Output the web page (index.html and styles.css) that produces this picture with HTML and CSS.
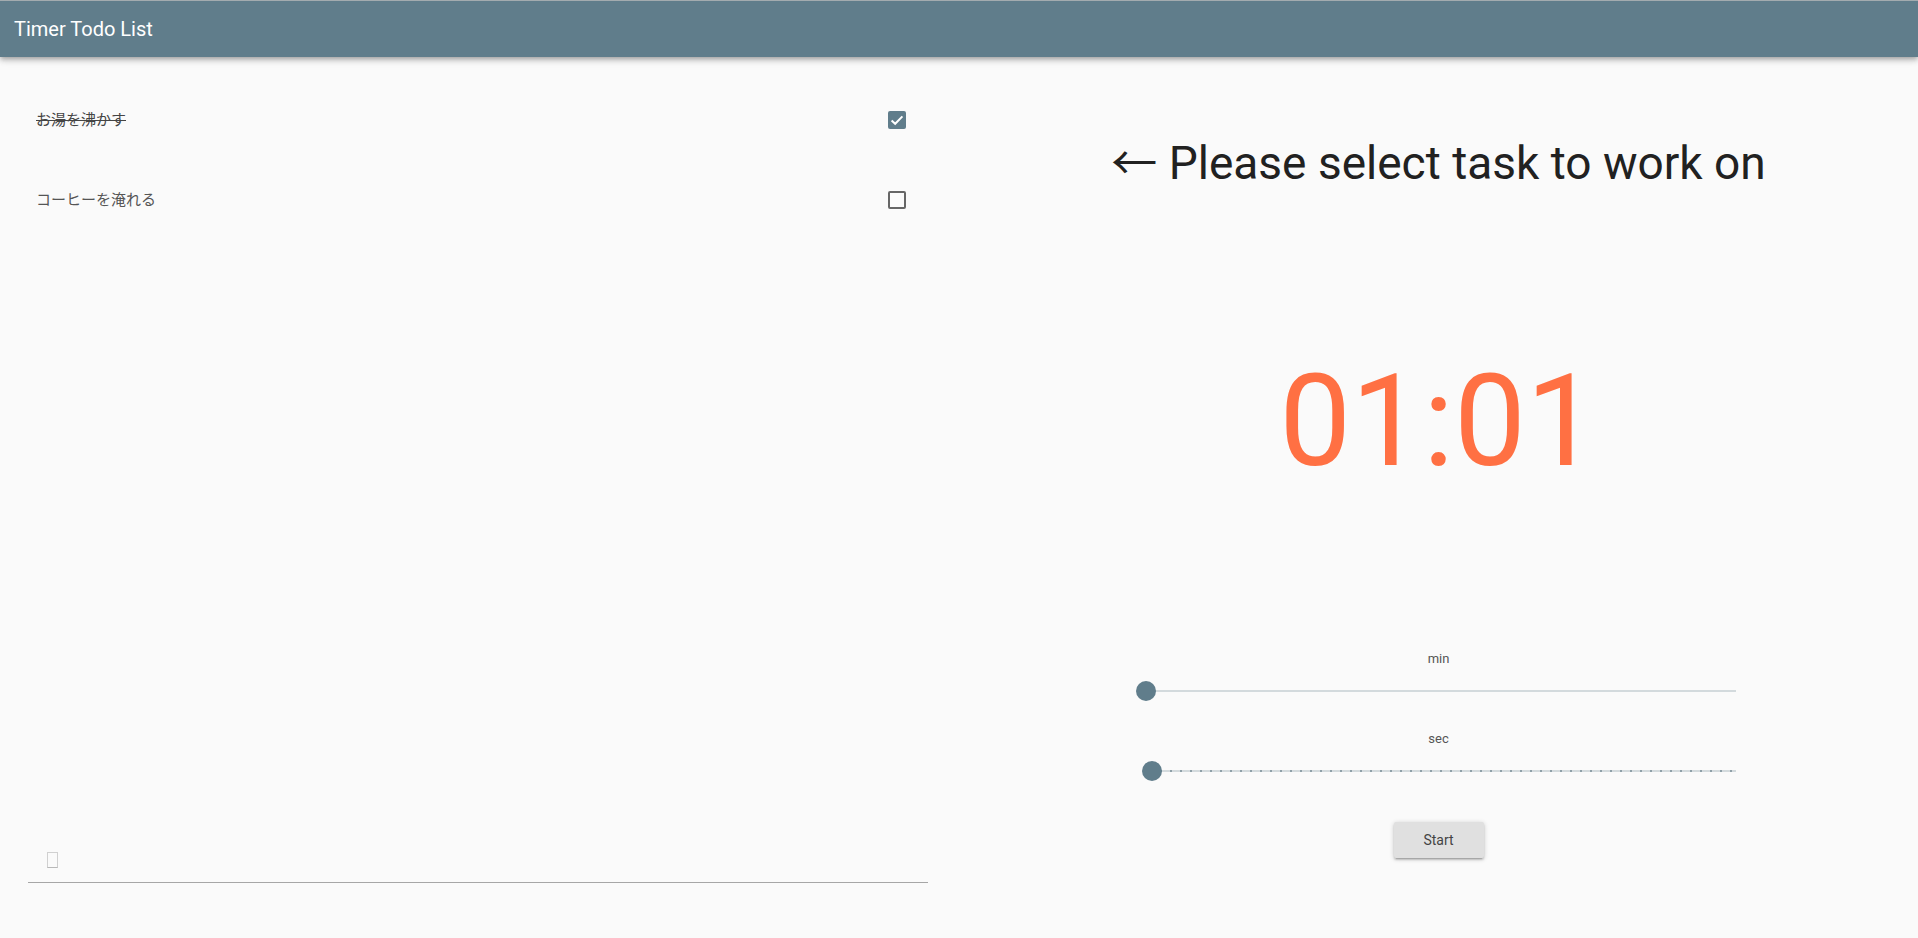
FILE: index.html
```html
<!DOCTYPE html>
<html lang="ja">
<head>
<meta charset="utf-8">
<title>Timer Todo List</title>
<link rel="stylesheet" href="styles.css">
</head>
<body>
<header class="appbar"><h1 class="appbar-title">Timer Todo List</h1></header>
<main class="layout">
  <section class="todo">
    <ul class="todo-list">
      <li class="todo-item done">
        <span class="todo-label">お湯を沸かす</span>
        <span class="checkbox checked"><svg viewBox="0 0 18 18" width="18" height="18"><path d="M3.6 9.4 L7.2 12.8 L14.4 5.4" fill="none" stroke="#fff" stroke-width="2"/></svg></span>
      </li>
      <li class="todo-item">
        <span class="todo-label">コーヒーを淹れる</span>
        <span class="checkbox"></span>
      </li>
    </ul>
    <div class="new-item"><span class="tofu"></span></div>
  </section>
  <section class="timer">
    <h2 class="prompt">← Please select task to work on</h2>
    <div class="clock">01:01</div>
    <div class="slider-label first">min</div>
    <div class="slider"><span class="track"></span><span class="thumb"></span></div>
    <div class="slider-label">sec</div>
    <div class="slider"><span class="track ticks"></span><span class="thumb" style="left: 6px"></span></div>
    <button class="start-btn">Start</button>
  </section>
</main>
</body>
</html>
```
FILE: styles.css
```css
* { box-sizing: border-box; }
html, body { margin: 0; padding: 0; }
body {
  background: #fafafa;
  font-family: Roboto, "Noto Sans CJK JP", sans-serif;
  height: 938px;
  overflow: hidden;
}
.appbar {
  position: relative;
  z-index: 2;
  height: 57px;
  border-top: 1px solid #a3abaf;
  background: #607d8b;
  display: flex;
  align-items: center;
  padding-left: 14px;
  box-shadow: 0 2px 4px -1px rgba(0,0,0,.2), 0 4px 5px 0 rgba(0,0,0,.14), 0 1px 10px 0 rgba(0,0,0,.12);
}
.appbar-title {
  margin: 0;
  color: #fff;
  font-size: 20px;
  font-weight: 400;
  line-height: 24px;
  padding-bottom: 1px;
}
.layout {
  display: grid;
  grid-template-columns: 1fr 1fr;
  height: 881px;
}
.todo {
  display: flex;
  flex-direction: column;
  padding: 0 31px 55px 28px;
}
.todo-list {
  list-style: none;
  margin: 0;
  padding: 23px 0 0;
}
.todo-item {
  height: 80px;
  display: flex;
  align-items: center;
  justify-content: space-between;
  padding: 0 22px 0 8px;
}
.todo-label {
  font-family: Roboto, "Noto Sans CJK JP", sans-serif;
  font-size: 15px;
  color: #555;
  position: relative;
  top: -2px;
}
.todo-item.done .todo-label {
  color: #444;
  text-decoration: line-through;
}
.checkbox {
  width: 18px;
  height: 18px;
  border: 2px solid #666;
  border-radius: 2px;
  display: block;
}
.checkbox.checked {
  border: none;
  background: #607d8b;
}
.checkbox svg { display: block; }
.new-item {
  margin-top: auto;
  height: 39px;
  border-bottom: 1px solid #a6a6a6;
  padding: 8px 0 0 19px;
}
.tofu {
  display: block;
  width: 11px;
  height: 16px;
  border: 1px solid #d0d0d0;
  border-bottom-color: #b8b8b8;
}
.timer {
  display: flex;
  flex-direction: column;
  align-items: center;
  text-align: center;
}
.prompt {
  margin: 76px 0 0;
  font-size: 46px;
  font-weight: 400;
  line-height: 60px;
  color: #212121;
}
.clock {
  margin-top: 153px;
  font-size: 128px;
  line-height: 150px;
  color: #ff7043;
  font-weight: 400;
}
.slider-label {
  margin-top: 28px;
  font-size: 13px;
  line-height: 20px;
  color: #555;
}
.slider-label.first { margin-top: 153px; }
.slider {
  position: relative;
  width: 590px;
  height: 20px;
  margin-top: 12px;
  margin-left: 4px;
}
.track {
  position: absolute;
  left: 0;
  right: 0;
  top: 9px;
  height: 2px;
  background: #d3dadd;
}
.track.ticks {
  background-color: #d3dadd;
  background-image: linear-gradient(90deg, #8fa0a8 2px, transparent 2px);
  background-size: 10px 100%;
  background-position: 4px 0;
}
.thumb {
  position: absolute;
  left: 0;
  top: 0;
  width: 20px;
  height: 20px;
  margin-left: -10px;
  border-radius: 50%;
  background: #607d8b;
}
.start-btn {
  margin-top: 41px;
  width: 90px;
  height: 36px;
  border: none;
  border-radius: 2px;
  background: #e0e0e0;
  font-family: Roboto, sans-serif;
  font-size: 14px;
  color: #444;
  box-shadow: 0 1px 5px 0 rgba(0,0,0,.2), 0 2px 2px 0 rgba(0,0,0,.14), 0 3px 1px -2px rgba(0,0,0,.12);
  padding: 0;
}
```
